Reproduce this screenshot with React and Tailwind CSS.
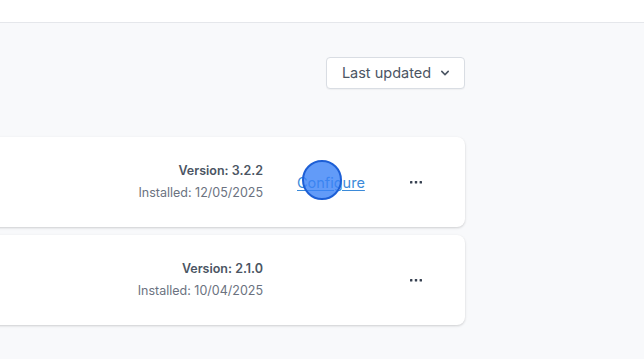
import React from "react";
import { HiChevronDown } from "react-icons/hi";

const PLUGINS = [
  { version: "3.2.2", installed: "12/05/2025", configurable: true },
  { version: "2.1.0", installed: "10/04/2025", configurable: false },
];

const PluginRow = ({ plugin }) => (
  <div className="-ml-4 h-[90px] rounded-lg bg-white shadow-[0_1px_3px_rgba(0,0,0,0.12),0_1px_2px_rgba(0,0,0,0.06)] flex items-center justify-end pr-[33px]">
    <div className="text-right text-[12.5px] leading-[22px]">
      <p className="font-semibold text-[#4b5563]">Version: {plugin.version}</p>
      <p className="text-[#6b7280]">Installed: {plugin.installed}</p>
    </div>
    <div className="w-[137px] pl-[34px]">
      {plugin.configurable && (
        <a href="#" className="text-[14.5px] text-[#3b8ad9] underline underline-offset-2">
          Configure
        </a>
      )}
    </div>
    <button className="w-8 h-8 flex items-center justify-center text-[#374151]">
      <svg width="14" height="4" viewBox="0 0 14 4" fill="currentColor">
        <rect x="1" y="1" width="2.4" height="2.4" rx="0.5" />
        <rect x="5.8" y="1" width="2.4" height="2.4" rx="0.5" />
        <rect x="10.6" y="1" width="2.4" height="2.4" rx="0.5" />
      </svg>
    </button>
  </div>
);

export default function App() {
  return (
    <div className="w-[644px] h-[359px] overflow-hidden bg-[#f8f9fb] font-['Inter',sans-serif] relative">
      <header className="h-[23px] bg-white border-b border-[#e5e7eb]" />

      <div className="pr-[179px] pt-[34px]">
        <div className="flex justify-end">
          <button className="h-[32px] w-[139px] flex items-center justify-center gap-1.5 pl-1 bg-white border border-[#d9dde3] rounded shadow-[0_1px_1px_rgba(0,0,0,0.04)] text-[14.5px] text-[#4b5563]">
            Last updated
            <HiChevronDown className="w-4 h-4 text-[#4b5563]" />
          </button>
        </div>

        <div className="mt-[48px] flex flex-col gap-2">
          {PLUGINS.map((p) => (
            <PluginRow key={p.version} plugin={p} />
          ))}
        </div>
      </div>

      {/* click marker */}
      <div className="absolute left-[302px] top-[160px] w-[40px] h-[40px] rounded-full bg-[#3b82f6]/80 border-2 border-[#1d5fd6]" />
    </div>
  );
}
